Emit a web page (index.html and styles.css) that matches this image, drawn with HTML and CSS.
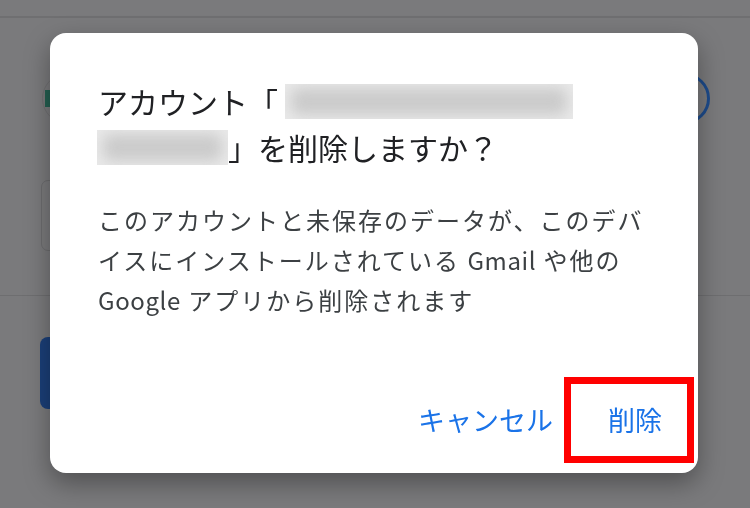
FILE: index.html
```html
<!DOCTYPE html>
<html lang="ja">
<head>
<meta charset="utf-8">
<title>アカウントを削除</title>
<link rel="stylesheet" href="styles.css">
</head>
<body>
<div class="page">
  <div class="header"></div>
  <div class="account-row">
    <div class="avatar"><span class="avatar-mark"></span></div>
    <div class="ring"></div>
  </div>
  <div class="field"></div>
  <div class="divider"></div>
  <div class="primary-btn"></div>
</div>

<div class="overlay">
  <div class="dialog" role="dialog">
    <div class="title">
      <div class="title-line">アカウント「<span class="masked mask-long"><span class="mask-blur"></span></span></div>
      <div class="title-line"><span class="masked mask-short"><span class="mask-blur"></span></span>」を削除しますか？</div>
    </div>
    <p class="body">このアカウントと未保存のデータが、このデバ<br>イスにインストールされている <span class="latin">Gmail</span> や他の<br><span class="latin">Google</span> アプリから削除されます</p>
    <div class="actions">
      <button class="btn">キャンセル</button>
      <button class="btn btn-highlight">削除</button>
    </div>
  </div>
</div>
</body>
</html>
```

FILE: styles.css
```css
* { box-sizing: border-box; }
html, body {
  margin: 0;
  padding: 0;
  width: 750px;
  height: 508px;
  overflow: hidden;
  background: #7a7a7c;
  font-family: "Noto Sans CJK JP", "Noto Sans", sans-serif;
}

/* dimmed page behind the dialog */
.page {
  display: flex;
  flex-direction: column;
  width: 750px;
  height: 508px;
}
.header {
  height: 18px;
  border-bottom: 2px solid #6f6f71;
}
.account-row {
  margin-top: 55px;
  height: 51px;
  display: flex;
  align-items: center;
  justify-content: space-between;
  padding: 0 40px 0 42px;
}
.avatar {
  width: 51px;
  height: 51px;
  border-radius: 50%;
  border: 1px solid #707072;
  display: flex;
  align-items: center;
}
.avatar-mark {
  margin-left: 2px;
  width: 6px;
  height: 17px;
  background: #245f51;
}
.ring {
  width: 51px;
  height: 51px;
  border-radius: 50%;
  border: 3px solid #1d4b8b;
}
.field {
  margin: 56px 0 0 41px;
  width: 640px;
  height: 71px;
  border: 1px solid #6c6c6e;
  border-radius: 7px;
}
.divider {
  margin-top: 44px;
  height: 1px;
  background: #6e6e70;
}
.primary-btn {
  margin: 41px 0 0 40px;
  width: 300px;
  height: 72px;
  border-radius: 8px;
  background: #1b3f78;
}

/* modal */
.overlay {
  position: fixed;
  inset: 0;
  padding: 33px 0 0 50px;
}
.dialog {
  width: 648px;
  height: 440px;
  background: #fff;
  border-radius: 16px;
  box-shadow: 0 10px 26px rgba(0, 0, 0, 0.35);
  padding: 45px 4px 10px 48px;
  display: flex;
  flex-direction: column;
}
.title {
  display: flex;
  flex-direction: column;
  color: #202124;
  font-size: 30px;
}
.title-line {
  height: 46px;
  display: flex;
  align-items: center;
  white-space: nowrap;
}
.masked {
  display: inline-block;
  height: 35px;
  overflow: hidden;
  position: relative;
  background: #e9e9e9;
}
.mask-long { width: 288px; margin-left: 7px; }
.mask-short { width: 131px; margin-left: -1px; }
.mask-blur {
  position: absolute;
  inset: 4px 6px;
  background: #cbcbcb;
  filter: blur(7px);
  border-radius: 8px;
}
.body {
  margin: 30px 0 0 0;
  color: #3c4043;
  font-size: 24px;
  letter-spacing: 2px;
  line-height: 40px;
  white-space: nowrap;
}
.latin {
  letter-spacing: 0.6px;
}
.actions {
  margin-top: auto;
  display: flex;
  justify-content: flex-end;
  align-items: center;
  gap: 11px;
}
.btn {
  font-family: inherit;
  font-size: 27px;
  color: #1a73e8;
  background: none;
  border: none;
  padding: 0;
  line-height: 40px;
  cursor: pointer;
}
.btn-highlight {
  width: 130px;
  height: 86px;
  border: 7px solid #ff0000;
  padding: 0 25px 0 37px;
  text-align: left;
}
```
